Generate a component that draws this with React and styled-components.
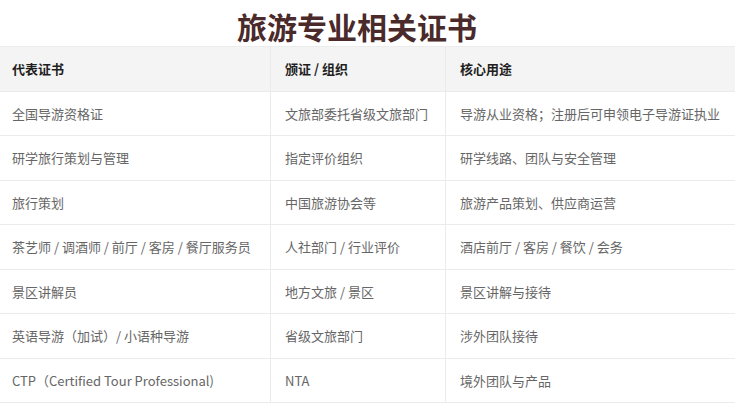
import React from "react";
import styled, { createGlobalStyle } from "styled-components";

const Global = createGlobalStyle`
  html, body { margin: 0; padding: 0; background: #ffffff; }
  body { font-family: "Noto Sans CJK SC", "Noto Sans", sans-serif; }
`;

const Page = styled.div`
  width: 735px;
  height: 403px;
  overflow: hidden;
  background: #ffffff;
  display: flex;
  flex-direction: column;
`;

const Title = styled.h1`
  margin: 0;
  height: 46px;
  padding: 5px 21px 0 0;
  box-sizing: border-box;
  display: flex;
  align-items: center;
  justify-content: center;
  font-family: "Noto Sans CJK SC", sans-serif;
  font-size: 30px;
  font-weight: 700;
  letter-spacing: 0;
  color: #4a2a2a;
  line-height: 1;
`;

const Table = styled.div`
  display: grid;
  grid-template-columns: 271px 175px 1fr;
  grid-auto-rows: 44.5px;
  border-top: 1px solid #ececec;
`;

const Cell = styled.div`
  display: flex;
  align-items: center;
  padding-left: ${(p) => (p.$first ? "12px" : "14px")};
  box-sizing: border-box;
  border-bottom: 1px solid #ebebeb;
  border-right: ${(p) => (p.$last ? "none" : "1px solid #ebebeb")};
  background: ${(p) => (p.$head ? "#f4f4f4" : "#ffffff")};
  color: ${(p) => (p.$head ? "#1f1f1f" : "#666666")};
  font-size: 13px;
  font-weight: ${(p) => (p.$head ? 700 : 400)};
  white-space: nowrap;
`;

const head = ["代表证书", "颁证 / 组织", "核心用途"];
const rows = [
  ["全国导游资格证", "文旅部委托省级文旅部门", "导游从业资格；注册后可申领电子导游证执业"],
  ["研学旅行策划与管理", "指定评价组织", "研学线路、团队与安全管理"],
  ["旅行策划", "中国旅游协会等", "旅游产品策划、供应商运营"],
  ["茶艺师 / 调酒师 / 前厅 / 客房 / 餐厅服务员", "人社部门 / 行业评价", "酒店前厅 / 客房 / 餐饮 / 会务"],
  ["景区讲解员", "地方文旅 / 景区", "景区讲解与接待"],
  ["英语导游（加试）/ 小语种导游", "省级文旅部门", "涉外团队接待"],
  ["CTP（Certified Tour Professional)", "NTA", "境外团队与产品"],
];

export default function App() {
  return (
    <Page>
      <Global />
      <Title>旅游专业相关证书</Title>
      <Table>
        {head.map((h, i) => (
          <Cell key={h} $head $first={i === 0} $last={i === 2}>
            {h}
          </Cell>
        ))}
        {rows.map((r, ri) =>
          r.map((c, i) => (
            <Cell key={ri + "-" + i} $first={i === 0} $last={i === 2}>
              {c}
            </Cell>
          ))
        )}
      </Table>
    </Page>
  );
}
